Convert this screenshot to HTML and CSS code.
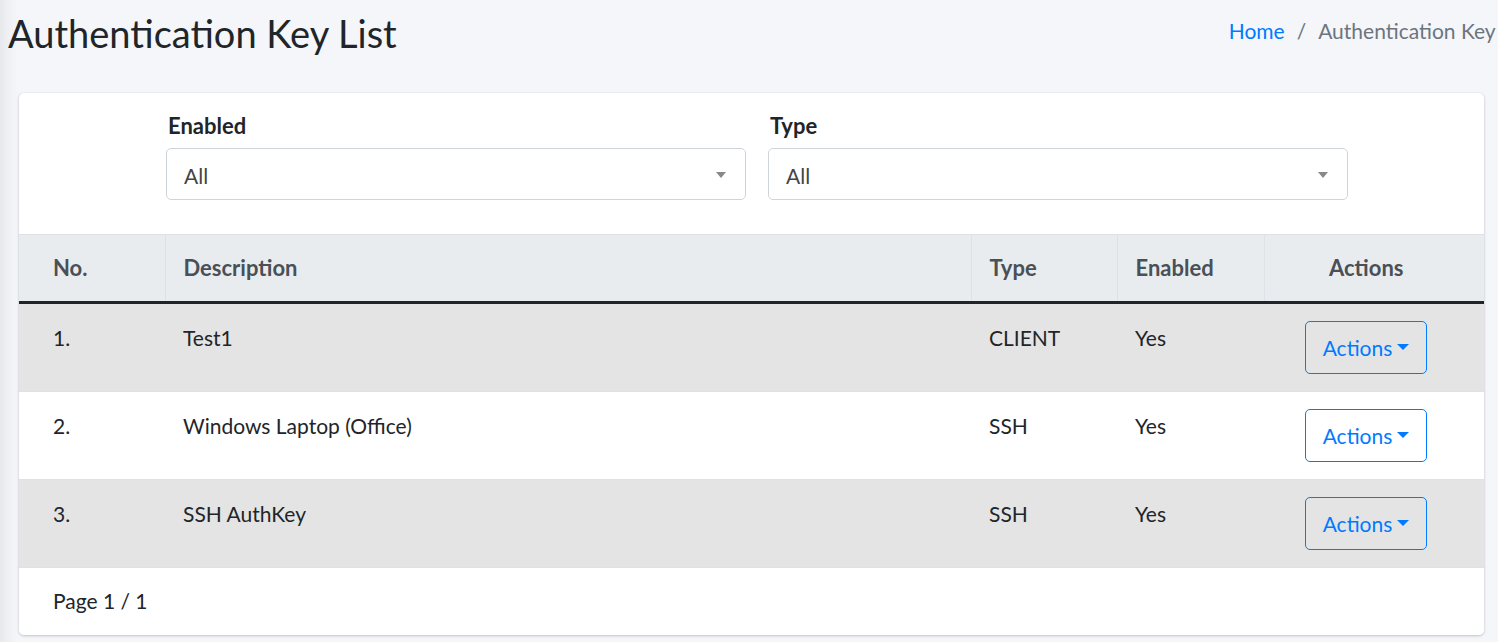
FILE: index.html
```html
<!DOCTYPE html>
<html lang="en">
<head>
<meta charset="utf-8">
<title>Authentication Key List</title>
<link rel="stylesheet" href="styles.css">
</head>
<body>
<div class="page">
  <div class="content-header">
    <h1 class="page-title">Authentication Key List</h1>
    <ol class="breadcrumb">
      <li class="crumb"><a href="#" class="crumb-link">Home</a></li>
      <li class="crumb crumb-sep">/</li>
      <li class="crumb crumb-active">Authentication Key List</li>
    </ol>
  </div>

  <div class="card">
    <div class="filters">
      <div class="field">
        <label class="field-label">Enabled</label>
        <div class="select"><span class="select-text">All</span><span class="select-arrow"></span></div>
      </div>
      <div class="field">
        <label class="field-label">Type</label>
        <div class="select"><span class="select-text">All</span><span class="select-arrow"></span></div>
      </div>
    </div>

    <table class="table">
      <colgroup>
        <col class="col-no">
        <col class="col-desc">
        <col class="col-type">
        <col class="col-enabled">
        <col class="col-actions">
      </colgroup>
      <thead>
        <tr>
          <th class="cell-first">No.</th>
          <th>Description</th>
          <th>Type</th>
          <th>Enabled</th>
          <th class="cell-last cell-center">Actions</th>
        </tr>
      </thead>
      <tbody>
        <tr class="row-odd">
          <td class="cell-first"><span class="cell-text">1.</span></td>
          <td><span class="cell-text">Test1</span></td>
          <td><span class="cell-text">CLIENT</span></td>
          <td><span class="cell-text">Yes</span></td>
          <td class="cell-last cell-center"><button class="btn-actions">Actions<span class="caret"></span></button></td>
        </tr>
        <tr>
          <td class="cell-first"><span class="cell-text">2.</span></td>
          <td><span class="cell-text">Windows Laptop (Office)</span></td>
          <td><span class="cell-text">SSH</span></td>
          <td><span class="cell-text">Yes</span></td>
          <td class="cell-last cell-center"><button class="btn-actions">Actions<span class="caret"></span></button></td>
        </tr>
        <tr class="row-odd">
          <td class="cell-first"><span class="cell-text">3.</span></td>
          <td><span class="cell-text">SSH AuthKey</span></td>
          <td><span class="cell-text">SSH</span></td>
          <td><span class="cell-text">Yes</span></td>
          <td class="cell-last cell-center"><button class="btn-actions">Actions<span class="caret"></span></button></td>
        </tr>
      </tbody>
    </table>

    <div class="card-footer">Page 1 / 1</div>
  </div>
</div>
</body>
</html>
```

FILE: styles.css
```css
html, body {
  margin: 0;
  padding: 0;
}
body {
  background: linear-gradient(to right, #e6e8ec 0, #eef0f4 8px, #f4f6f9 18px) #f4f6f9;
  font-family: Lato, "Liberation Sans", sans-serif;
  font-size: 21px;
  line-height: 30px;
  color: #212529;
  overflow: hidden;
  width: 1498px;
  height: 642px;
}
.page {
  padding: 0;
}
.content-header {
  display: flex;
  align-items: flex-start;
  padding: 12px 0 0 8px;
  height: 93px;
  box-sizing: border-box;
  width: 1533px;
}
.page-title {
  margin: 0;
  font-size: 38px;
  line-height: 43px;
  font-weight: 400;
  color: #212529;
}
.breadcrumb {
  display: flex;
  list-style: none;
  margin: 4px 0 0 auto;
  padding: 0;
  white-space: nowrap;
  font-size: 21px;
  line-height: 30px;
  flex-shrink: 0;
}
.crumb-link {
  color: #007bff;
  text-decoration: none;
}
.crumb-sep {
  color: #6c757d;
  padding: 0 12px;
}
.crumb-active {
  color: #6c757d;
}

.card {
  margin-left: 19px;
  width: 1465px;
  background: #fff;
  border-radius: 5px;
  box-shadow: 0 0 1px rgba(0,0,0,.125), 0 1px 3px rgba(0,0,0,.2);
  overflow: hidden;
}
.filters {
  display: grid;
  grid-template-columns: 580px 580px;
  column-gap: 22px;
  padding: 21px 0 34px 147px;
}
.field {
  display: flex;
  flex-direction: column;
}
.field-label {
  font-weight: 700;
  font-size: 22px;
  line-height: 24px;
  margin: 0 0 10px 2px;
  color: #212529;
}
.select {
  position: relative;
  height: 52px;
  box-sizing: border-box;
  border: 1px solid #ced4da;
  border-radius: 5px;
  padding: 3px 17px 0;
  display: flex;
  align-items: center;
  color: #444;
}
.select-arrow {
  position: absolute;
  right: 19px;
  top: 23px;
  width: 0;
  height: 0;
  border-style: solid;
  border-width: 6px 5px 0 5px;
  border-color: #888 transparent transparent transparent;
}

.table {
  width: 100%;
  border-collapse: collapse;
  table-layout: fixed;
}
.col-no { width: 146px; }
.col-type { width: 146px; }
.col-enabled { width: 147px; }
.col-actions { width: 220px; }

.table th {
  background: #e9ecef;
  color: #495057;
  font-weight: 700;
  font-size: 22px;
  text-align: left;
  padding: 18px 18px;
  border-top: 1px solid #dee2e6;
  border-left: 1px solid #dee2e6;
  border-bottom: 3px solid #212529;
}
.table th:first-child {
  border-left: none;
}
.table td {
  padding: 17px 18px;
  vertical-align: top;
  border-top: 1px solid #dee2e6;
  text-align: left;
}
.cell-text {
  display: block;
  padding-top: 2px;
}
.table thead + tbody tr:first-child td {
  border-top: none;
}
.table .cell-first {
  padding-left: 34px;
}
.table .cell-last {
  padding-right: 34px;
}
.table .cell-center {
  text-align: center;
}
.row-odd {
  background: #e4e4e4;
}
.btn-actions {
  font-family: inherit;
  font-size: 21px;
  line-height: 30px;
  color: #007bff;
  background: transparent;
  border: 1px solid #007bff;
  border-radius: 5px;
  padding: 10.5px 17px;
  display: inline-flex;
  align-items: center;
  cursor: pointer;
}
.caret {
  display: inline-block;
  margin-left: 5px;
  width: 0;
  height: 0;
  border-top: 6px solid #007bff;
  border-left: 6px solid transparent;
  border-right: 6px solid transparent;
  margin-top: -2px;
}
.card-footer {
  border-top: 1px solid #dee2e6;
  padding: 18px 34px 19px;
  background: #fff;
}
```
